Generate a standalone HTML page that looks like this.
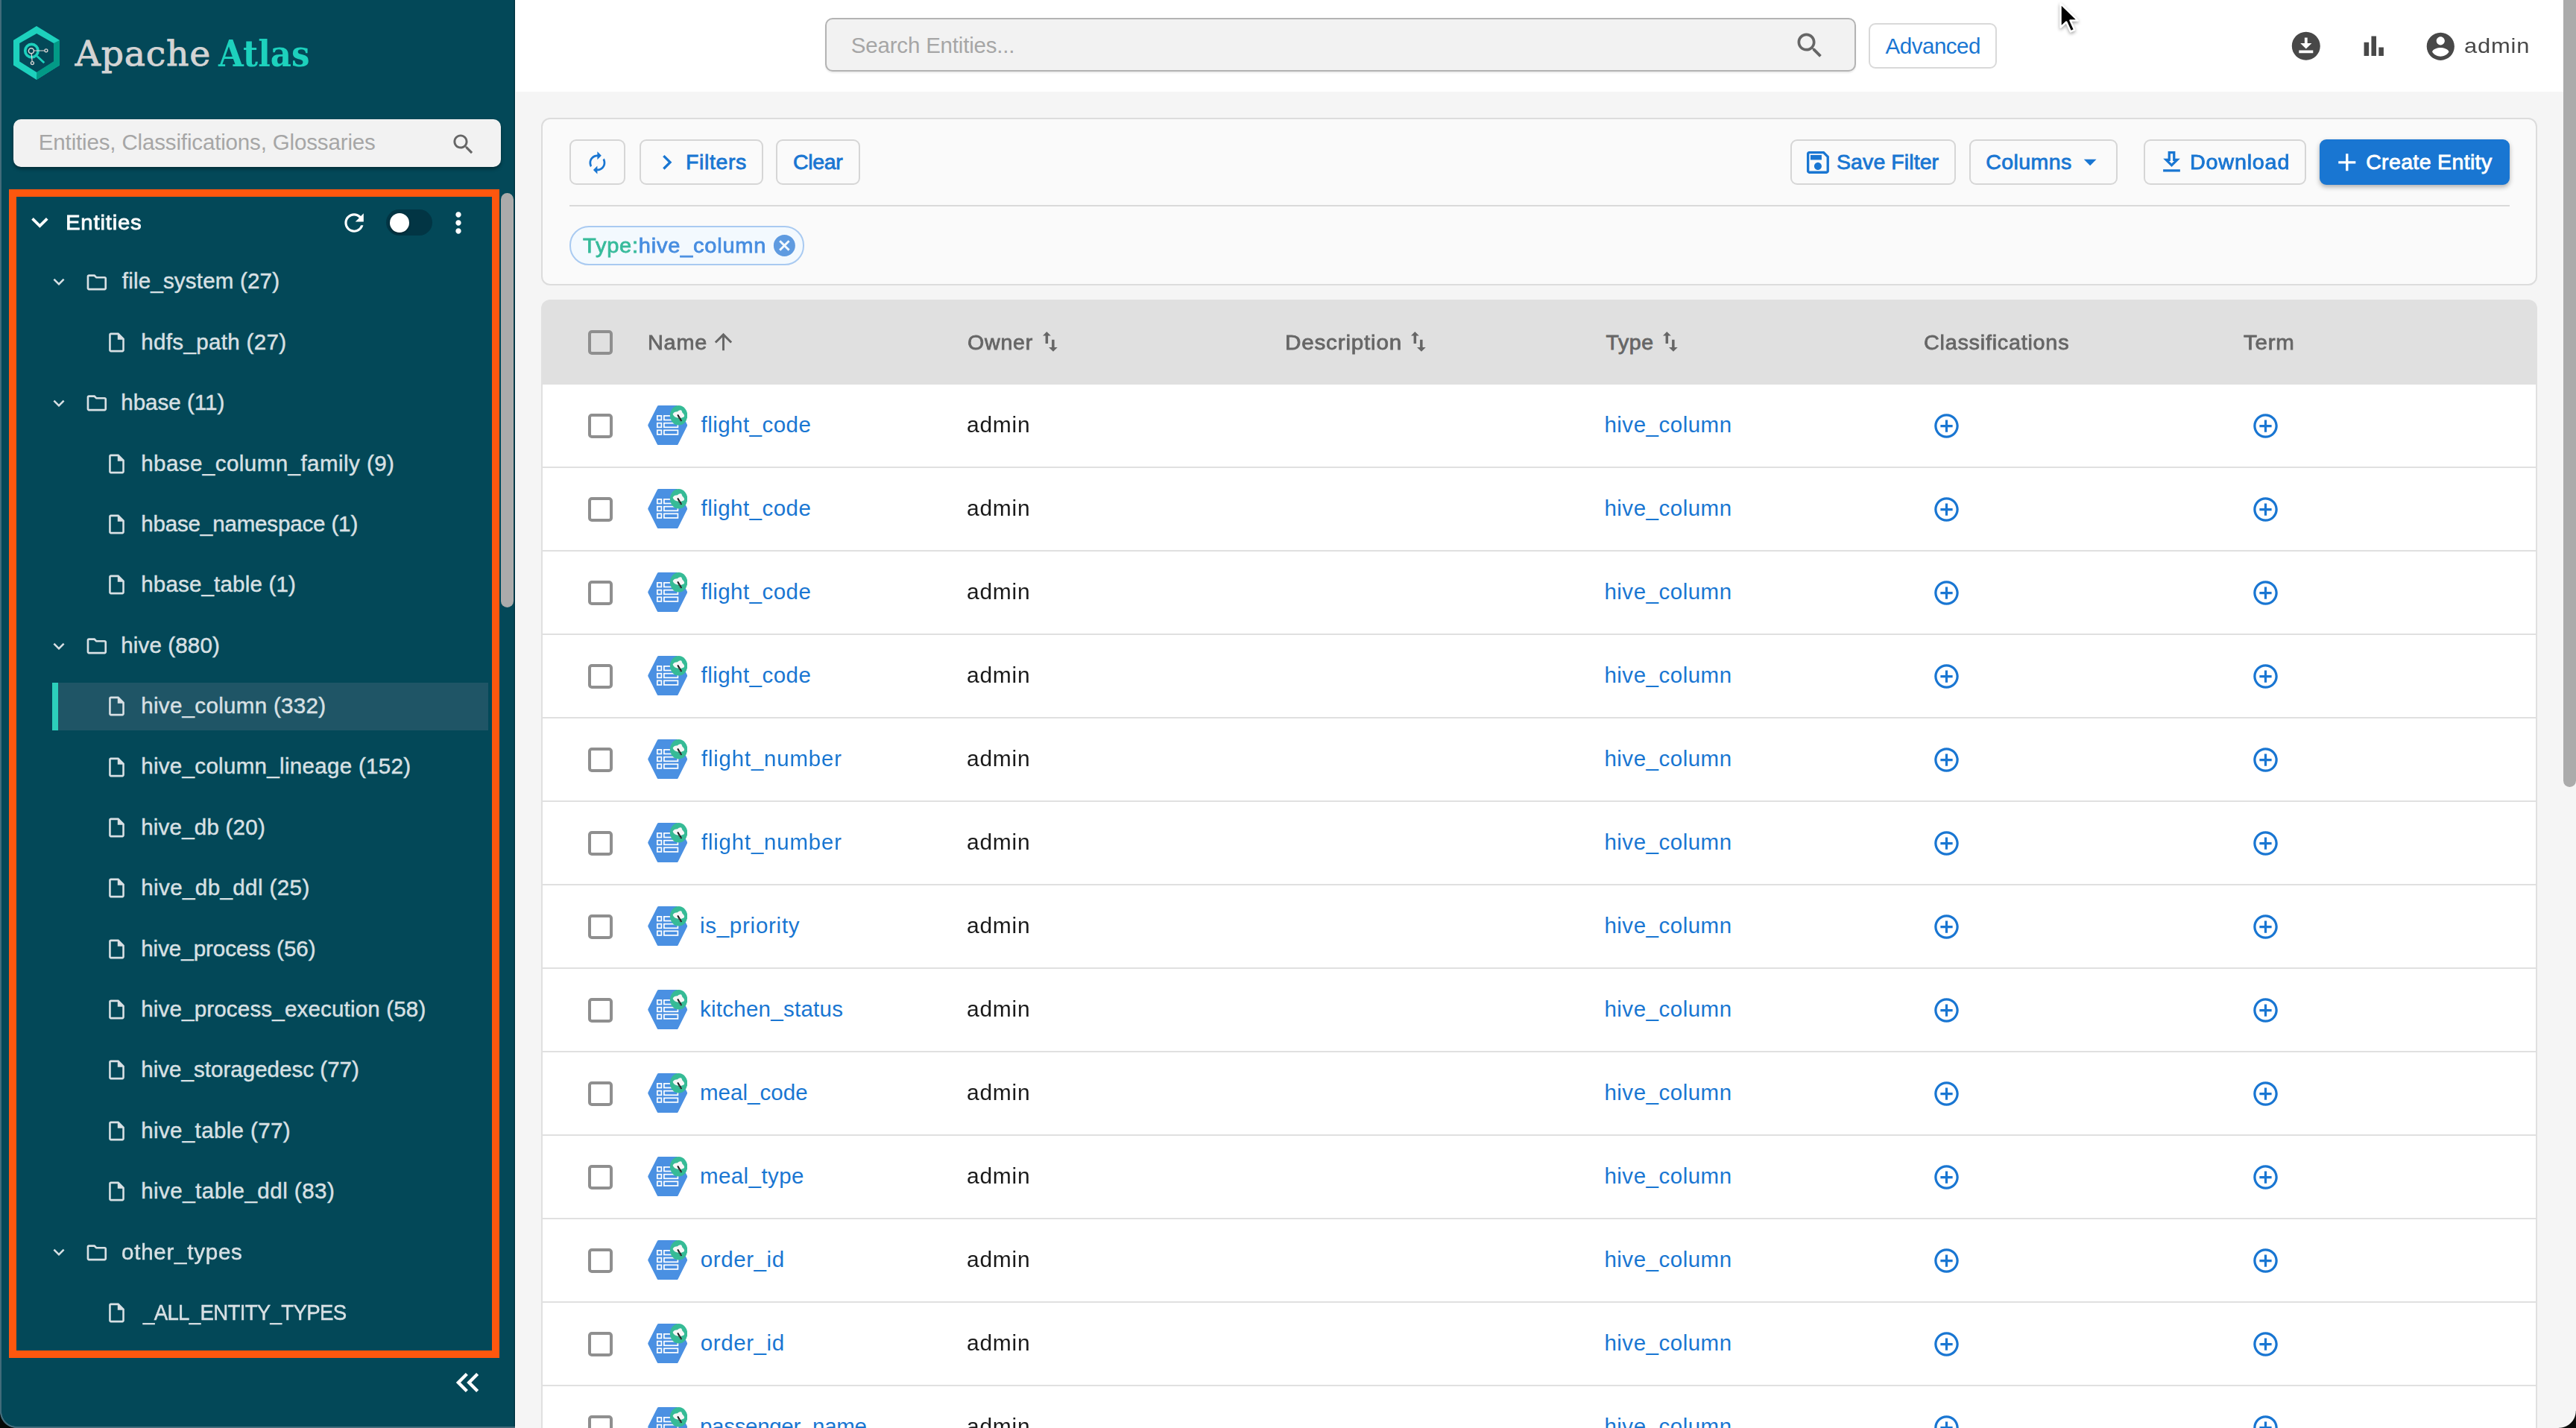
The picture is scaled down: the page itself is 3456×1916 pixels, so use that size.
<!DOCTYPE html>
<html lang="en"><head><meta charset="utf-8"><title>Apache Atlas</title>
<style>
*{box-sizing:border-box;margin:0;padding:0}
html,body{width:3456px;height:1916px;overflow:hidden;background:#f5f5f5}
body{font-family:"Liberation Sans",sans-serif;color:#1a1a1a}
#app{position:absolute;left:0;top:0;width:3456px;height:1916px;overflow:hidden;background:#f5f5f5}
.ic{position:absolute;display:block;overflow:visible}
.t{position:absolute;white-space:pre;line-height:1}
a{text-decoration:none}
/* sidebar */
#sidebar{position:absolute;left:0;top:0;width:691px;height:1916px;background:#034858;overflow:hidden;box-shadow:inset -1.500px 0 0 #023644,1px 0 0 #fff}
#sidebar .edge{position:absolute;left:0;top:0;width:691px;height:1916px;border-left:2px solid #416b7a;border-bottom:2px solid #416b7a}
.brand{position:absolute;top:47.800px;white-space:pre;line-height:1;font-family:"DejaVu Serif",serif;font-size:48.800px}
.brand.apache{left:100.800px;top:48px;font-size:47.300px;letter-spacing:.75px;color:#d4d4d4;-webkit-text-stroke:.9px #d4d4d4}
.brand.atlas{left:293px;top:47.900px;color:#1dd1bd;font-weight:700;transform:scaleX(.893);transform-origin:0 0}
.sbsearch{position:absolute;left:18px;top:160px;width:654px;height:64px;border-radius:10px;background:#f2f2f2;box-shadow:0 3px 4px rgba(0,0,0,.35)}
.sbsearch .ph,.gsearch .ph{color:#a6a6a6}
.frame{position:absolute;left:12px;top:254px;width:658px;height:1568px;border:10px solid #fe570e}
.sbscroll{position:absolute;left:672px;top:259px;width:17px;height:556px;border-radius:8.500px;background:#ababab}
.toggle{position:absolute;left:518px;top:281px;width:62px;height:35px;border-radius:17.500px;background:#023544}
.toggle i{position:absolute;left:5px;top:4.500px;width:26px;height:26px;border-radius:50%;background:#fff;box-shadow:0 1px 3px rgba(0,0,0,.4)}
.trow{position:absolute;left:70px;width:585px;height:64px}
.trow.sel{background:#1f5566;border-left:8px solid #2ccfbb}
.trow.sel>*{margin-left:-8px}
.trow .t{color:#d8e0e4;-webkit-text-stroke:.45px #d8e0e4}
/* topbar */
#topbar{position:absolute;left:691px;top:0;width:2765px;height:122.500px;background:#fff}
.gsearch{position:absolute;left:416px;top:24px;width:1382.500px;height:72.400px;border:2px solid #b3b3b3;border-radius:10px;background:#f2f2f2;box-shadow:0 2px 2px rgba(0,0,0,.08)}
.advbtn{position:absolute;left:1816.300px;top:31px;width:172px;height:61px;border:2px solid #d9d9d9;border-radius:9px;background:#fff}
/* main */
#main{position:absolute;left:0;top:0;width:3456px;height:1916px;pointer-events:none}
.fcard{position:absolute;left:726px;top:158px;width:2678px;height:225px;border:2px solid #dcdcdc;border-radius:12px;background:#fafafa}
.btn{position:absolute;top:27.300px;height:60.300px;border:2px solid #d6d6d6;border-radius:9px;background:#fafafa}
.btn .t{color:#1976d2}
.sb{-webkit-text-stroke:.8px currentColor}
.btn.primary{background:#1976d2;border-color:#1976d2;box-shadow:0 3px 6px rgba(0,0,0,.3)}
.btn.primary .t{color:#fff}
.fdiv{position:absolute;left:36px;top:115px;width:2603px;height:2px;background:#d9d9d9}
.chip{position:absolute;left:36.300px;top:143.300px;width:314.700px;height:52.300px;border:2px solid #a9caf1;border-radius:26px;background:#f3f9fe}
.chip .k{color:#37bb9b}
.chip .v{color:#478de0}
.thead{position:absolute;left:726px;top:402.300px;width:2678px;height:113.700px;background:#e0e0e0;border-radius:12px 12px 0 0}
.thead .t{color:#666}
.cb{position:absolute;left:62.500px;width:33px;height:33px;border:4px solid #8f8f8f;border-radius:5px;background:#fff}
.thead .cb{background:#e0e0e0}
.tr{position:absolute;left:726px;width:2678px;height:112px;background:#fff;border-bottom:2px solid #e0e0e0;border-left:2px solid #e0e0e0;border-right:2px solid #e0e0e0}
.tr>*{margin-left:-2px}
.tr .lnk{color:#1976d2}
.sort{width:20px;height:27px;top:42.900px}
#vscroll{position:absolute;left:3439px;top:-8px;width:16.800px;height:1064px;border-radius:8.400px;background:#ababab}
#cursor{position:absolute;left:2762px;top:3px;width:30px;height:45px;filter:drop-shadow(0 2px 2px rgba(0,0,0,.35))}
.corner{position:absolute;left:0;top:1894px;width:22px;height:22px;background:radial-gradient(circle at 22px 0,rgba(0,0,0,0) 19.500px,#416b7a 20px,#416b7a 21.600px,#060906 22.300px)}
.corner.r{left:3433px;top:1893px;width:23px;height:23px;background:radial-gradient(circle at 0 0,rgba(0,0,0,0) 22.300px,#0a0c0a 23.300px)}

</style></head>
<body>
<div id="app">

<div id="topbar">
<div class="gsearch"><span class="t ph" style="left:32.8px;top:20.2px;font-size:29.5px;letter-spacing:-0.19px;">Search Entities...</span><svg class="ic" style="left:1296.8px;top:12.5px;width:44.3px;height:44.3px;" viewBox="0 0 24 24"><path fill="#666" d="M15.5 14h-.79l-.28-.27C15.41 12.59 16 11.11 16 9.5 16 5.91 13.09 3 9.5 3S3 5.91 3 9.5 5.91 16 9.5 16c1.61 0 3.09-.59 4.23-1.57l.27.28v.79l5 4.99L20.49 19l-4.99-5zm-6 0C7.01 14 5 11.990 5 9.5S7.010 5 9.5 5 14 7.010 14 9.5 11.990 14 9.5 14z"/></svg></div>
<div class="advbtn"><span class="t" style="left:20.3px;top:13.5px;font-size:29.5px;letter-spacing:-0.48px;color:#1976d2">Advanced</span></div>
<svg class="ic" style="left:2380.2px;top:38.8px;width:45.6px;height:45.6px;" viewBox="0 0 24 24"><path fill="#484848" d="M12 2C6.490 2 2 6.490 2 12s4.490 10 10 10 10-4.490 10-10S17.510 2 12 2zm-1 8V6h2v4h3l-4 4-4-4h3zm6 7H7v-2h10v2z"/></svg>
<svg class="ic" style="left:2473.9px;top:41.9px;width:39.5px;height:39.5px;" viewBox="0 0 24 24"><path fill="#484848" d="M4 9h4v11H4zm12 4h4v7h-4zm-6-9h4v16h-4z"/></svg>
<svg class="ic" style="left:2560.7px;top:39.8px;width:44.6px;height:44.6px;" viewBox="0 0 24 24"><path fill="#484848" d="M12 2C6.480 2 2 6.480 2 12s4.480 10 10 10 10-4.480 10-10S17.520 2 12 2zm0 3c1.660 0 3 1.340 3 3s-1.340 3-3 3-3-1.340-3-3 1.340-3 3-3zm0 14.200c-2.500 0-4.710-1.280-6-3.220.030-1.990 4-3.080 6-3.080 1.990 0 5.970 1.090 6 3.080-1.290 1.940-3.500 3.220-6 3.220z"/></svg>
<span class="t" style="left:2614.5px;top:46.5px;font-size:28.5px;transform:scaleX(1.0852);transform-origin:0 0;letter-spacing:0.75px;color:#484848">admin</span>
</div>
<div id="main">
<div class="fcard">
<div class="btn" style="left:36.3px;width:75.2px"><svg class="ic" style="left:18.8px;top:12.6px;width:32.8px;height:32.8px;" viewBox="0 0 24 24"><path fill="#1976d2" d="M12 6v3l4-4-4-4v3c-4.420 0-8 3.580-8 8 0 1.570.460 3.030 1.240 4.260L6.700 14.800c-.450-.830-.7-1.790-.7-2.800 0-3.310 2.690-6 6-6zm6.760 1.740L17.300 9.200c.440.840.7 1.790.7 2.800 0 3.310-2.690 6-6 6v-3l-4 4 4 4v-3c4.420 0 8-3.580 8-8 0-1.570-.460-3.030-1.240-4.260z"/></svg></div>
<div class="btn" style="left:130.3px;width:165.3px"><svg class="ic" style="left:15.1px;top:8.5px;width:39.6px;height:39.6px;" viewBox="0 0 24 24"><path fill="#1976d2" d="M10 6 8.59 7.41 13.17 12l-4.580 4.590L10 18l6-6z"/></svg><span class="t sb" style="left:59.7px;top:13.5px;font-size:28.5px;letter-spacing:0.61px;">Filters</span></div>
<div class="btn" style="left:313px;width:112.5px"><span class="t sb" style="left:21.1px;top:13.5px;font-size:28.5px;letter-spacing:-0.34px;">Clear</span></div>
<div class="btn" style="left:1673.5px;width:222.1px"><svg class="ic" style="left:15.5px;top:8.4px;width:39.9px;height:39.9px;" viewBox="0 0 24 24"><path fill="#1976d2" d="M17 3H5c-1.110 0-2 .9-2 2v14c0 1.100.890 2 2 2h14c1.100 0 2-.9 2-2V7l-4-4zm2 16H5V5h11.170L19 7.830V19zm-7-7c-1.660 0-3 1.340-3 3s1.340 3 3 3 3-1.340 3-3-1.340-3-3-3zM6 6h9v4H6z"/></svg><span class="t sb" style="left:60.5px;top:13.5px;font-size:28.5px;letter-spacing:0.09px;">Save Filter</span></div>
<div class="btn" style="left:1914.4px;width:198.4px"><span class="t sb" style="left:19.9px;top:13.5px;font-size:28.5px;letter-spacing:0.41px;">Columns</span><svg class="ic" style="left:139.3px;top:8.1px;width:40.3px;height:40.3px;" viewBox="0 0 24 24"><path fill="#1976d2" d="M7 10l5 5 5-5z"/></svg></div>
<div class="btn" style="left:2148.3px;width:217.4px"><svg class="ic" style="left:15.9px;top:9.1px;width:39px;height:39px;" viewBox="0 0 24 24"><path fill="#1976d2" d="M13 5v6h1.170L12 13.170 9.830 11H11V5h2m2-2H9v6H5l7 7 7-7h-4V3zm4 15H5v2h14v-2z"/></svg><span class="t sb" style="left:60.1px;top:13.5px;font-size:28.5px;transform:scaleX(1.0106);transform-origin:0 0;letter-spacing:0.75px;">Download</span></div>
<div class="btn primary" style="left:2383.9px;width:255px"><svg class="ic" style="left:15.1px;top:9px;width:39.6px;height:39.6px;" viewBox="0 0 24 24"><path fill="#fff" d="M19 13h-6v6h-2v-6H5v-2h6V5h2v6h6v2z"/></svg><span class="t sb" style="left:60.3px;top:13.5px;font-size:28.5px;letter-spacing:0.35px;">Create Entity</span></div>
<div class="fdiv"></div>
<div class="chip"><span class="t sb" style="left:15.9px;top:9.5px;font-size:28.5px;transform:scaleX(1.0184);transform-origin:0 0;letter-spacing:0.75px;"><span class="k">Type:</span><span class="v">hive_column</span></span><svg class="ic" style="left:268.8px;top:7px;width:34.8px;height:34.8px;" viewBox="0 0 24 24"><path fill="#5f9be0" d="M12 2C6.470 2 2 6.470 2 12s4.470 10 10 10 10-4.470 10-10S17.530 2 12 2zm5 13.590L15.590 17 12 13.410 8.410 17 7 15.590 10.590 12 7 8.410 8.410 7 12 10.590 15.590 7 17 8.410 13.410 12 17 15.590z"/></svg></div>
</div>
<div class="thead">
<div class="cb" style="top:40.600px"></div>
<span class="t sb" style="left:142.7px;top:42.7px;font-size:28.5px;transform:scaleX(1.0117);transform-origin:0 0;letter-spacing:0.75px;">Name</span><svg class="ic" style="left:227.4px;top:38.4px;width:35px;height:35px;" viewBox="0 0 24 24"><path fill="#666" d="M4 12l1.410 1.410L11 7.830V20h2V7.830l5.580 5.590L20 12l-8-8-8 8z"/></svg>
<span class="t sb" style="left:572.3px;top:42.7px;font-size:28.5px;transform:scaleX(1.0032);transform-origin:0 0;letter-spacing:0.75px;">Owner</span><svg class="ic sort" viewBox="0 0 20 27" style="left:673px"><path fill="#666" d="M5.300 0 0 5.600h3.600v10.500h3.500V5.600h3.700zM12.100 10.800v10.300H8l6 5.600 5.800-5.600h-4.200V10.800z"/></svg>
<span class="t sb" style="left:997.8px;top:42.7px;font-size:28.5px;transform:scaleX(1.0413);transform-origin:0 0;letter-spacing:0.75px;">Description</span><svg class="ic sort" viewBox="0 0 20 27" style="left:1167.4px"><path fill="#666" d="M5.300 0 0 5.600h3.600v10.500h3.500V5.600h3.700zM12.100 10.800v10.300H8l6 5.600 5.800-5.600h-4.200V10.800z"/></svg>
<span class="t sb" style="left:1428.5px;top:42.7px;font-size:28.5px;letter-spacing:0.64px;">Type</span><svg class="ic sort" viewBox="0 0 20 27" style="left:1505px"><path fill="#666" d="M5.300 0 0 5.600h3.600v10.500h3.500V5.600h3.700zM12.100 10.800v10.300H8l6 5.600 5.800-5.600h-4.200V10.800z"/></svg>
<span class="t sb" style="left:1855.1px;top:42.7px;font-size:28.5px;transform:scaleX(1.0097);transform-origin:0 0;letter-spacing:0.75px;">Classifications</span>
<span class="t sb" style="left:2284px;top:42.7px;font-size:28.5px;transform:scaleX(1.0345);transform-origin:0 0;letter-spacing:0.75px;">Term</span>
</div>
<div class="tr" style="top:516px"><div class="cb" style="top:38.600px"></div><svg class="ic" style="left:142.900px;top:27.900px;width:53.400px;height:53.400px;overflow:hidden" viewBox="0 0 53.400 53.400"><path fill="#4a90e2" stroke="#4a90e2" stroke-width="5" stroke-linejoin="round" d="M2.800 26.700 14.900 2.500H38.500L50.600 26.700 38.500 50.900H14.900z"/><g fill="#4a90e2" stroke="#fff" stroke-width="1.700"><rect x="12.800" y="13.900" width="5.600" height="5.600"/><rect x="12.800" y="23.700" width="5.600" height="5.600"/><rect x="12.800" y="33.300" width="5.600" height="5.600"/><rect x="21.900" y="13.900" width="18.500" height="5.600"/><rect x="21.900" y="23.700" width="18.500" height="5.600"/><rect x="21.900" y="33.300" width="18.500" height="5.600"/></g><g><ellipse cx="41.600" cy="13.300" rx="11.700" ry="13.200" fill="#36bb96"/><path fill="#f6f6f6" d="M33.600 11.800c.8-2.600 3.800-3.700 6.400-3.600 1.300-1.700 3.900-2.600 5-1.700 1.100.9.900 2.400 1.800 3.600 1.300 1.400 2.800 2.900 2.200 4.500-.6 1.600-2.700 1.400-4 2.300-1.400.9-2.700.3-3.900-.7-2.300.7-5.900-.6-7.500-4.400z"/><path fill="none" stroke="#1a1a1a" stroke-width="2.100" stroke-linecap="round" d="M40.600 13.200 44.900 20.200"/><path fill="none" stroke="#555" stroke-width="1.100" d="M41.200 17.600l3-1.400M42.800 20.400l2.800-1.200"/></g></svg><a class="t lnk" style="left:214.5px;top:39.1px;font-size:29.5px;letter-spacing:0.46px;">flight_code</a><span class="t" style="left:571.1px;top:39.1px;font-size:29.5px;transform:scaleX(1.0156);transform-origin:0 0;letter-spacing:0.75px;">admin</span><a class="t lnk" style="left:1426.4px;top:39.1px;font-size:29.5px;letter-spacing:0.51px;">hive_column</a><svg class="ic" style="left:1865.9px;top:35.7px;width:39px;height:39px;" viewBox="0 0 24 24"><path fill="#1976d2" d="M13 7h-2v4H7v2h4v4h2v-4h4v-2h-4V7zm-1-5C6.480 2 2 6.480 2 12s4.480 10 10 10 10-4.480 10-10S17.520 2 12 2zm0 18c-4.410 0-8-3.590-8-8s3.590-8 8-8 8 3.590 8 8-3.590 8-8 8z"/></svg><svg class="ic" style="left:2293.9px;top:35.7px;width:39px;height:39px;" viewBox="0 0 24 24"><path fill="#1976d2" d="M13 7h-2v4H7v2h4v4h2v-4h4v-2h-4V7zm-1-5C6.480 2 2 6.480 2 12s4.480 10 10 10 10-4.480 10-10S17.520 2 12 2zm0 18c-4.410 0-8-3.590-8-8s3.590-8 8-8 8 3.590 8 8-3.590 8-8 8z"/></svg></div>
<div class="tr" style="top:628px"><div class="cb" style="top:38.600px"></div><svg class="ic" style="left:142.900px;top:27.900px;width:53.400px;height:53.400px;overflow:hidden" viewBox="0 0 53.400 53.400"><path fill="#4a90e2" stroke="#4a90e2" stroke-width="5" stroke-linejoin="round" d="M2.800 26.700 14.900 2.500H38.500L50.600 26.700 38.500 50.900H14.900z"/><g fill="#4a90e2" stroke="#fff" stroke-width="1.700"><rect x="12.800" y="13.900" width="5.600" height="5.600"/><rect x="12.800" y="23.700" width="5.600" height="5.600"/><rect x="12.800" y="33.300" width="5.600" height="5.600"/><rect x="21.900" y="13.900" width="18.500" height="5.600"/><rect x="21.900" y="23.700" width="18.500" height="5.600"/><rect x="21.900" y="33.300" width="18.500" height="5.600"/></g><g><ellipse cx="41.600" cy="13.300" rx="11.700" ry="13.200" fill="#36bb96"/><path fill="#f6f6f6" d="M33.600 11.800c.8-2.600 3.800-3.700 6.400-3.600 1.300-1.700 3.900-2.600 5-1.700 1.100.9.900 2.400 1.800 3.600 1.300 1.400 2.800 2.900 2.200 4.500-.6 1.600-2.700 1.400-4 2.300-1.400.9-2.700.3-3.900-.7-2.300.7-5.900-.6-7.500-4.400z"/><path fill="none" stroke="#1a1a1a" stroke-width="2.100" stroke-linecap="round" d="M40.600 13.200 44.900 20.200"/><path fill="none" stroke="#555" stroke-width="1.100" d="M41.200 17.600l3-1.400M42.800 20.400l2.800-1.200"/></g></svg><a class="t lnk" style="left:214.5px;top:39.1px;font-size:29.5px;letter-spacing:0.46px;">flight_code</a><span class="t" style="left:571.1px;top:39.1px;font-size:29.5px;transform:scaleX(1.0156);transform-origin:0 0;letter-spacing:0.75px;">admin</span><a class="t lnk" style="left:1426.4px;top:39.1px;font-size:29.5px;letter-spacing:0.51px;">hive_column</a><svg class="ic" style="left:1865.9px;top:35.7px;width:39px;height:39px;" viewBox="0 0 24 24"><path fill="#1976d2" d="M13 7h-2v4H7v2h4v4h2v-4h4v-2h-4V7zm-1-5C6.480 2 2 6.480 2 12s4.480 10 10 10 10-4.480 10-10S17.520 2 12 2zm0 18c-4.410 0-8-3.590-8-8s3.590-8 8-8 8 3.590 8 8-3.590 8-8 8z"/></svg><svg class="ic" style="left:2293.9px;top:35.7px;width:39px;height:39px;" viewBox="0 0 24 24"><path fill="#1976d2" d="M13 7h-2v4H7v2h4v4h2v-4h4v-2h-4V7zm-1-5C6.480 2 2 6.480 2 12s4.480 10 10 10 10-4.480 10-10S17.520 2 12 2zm0 18c-4.410 0-8-3.590-8-8s3.590-8 8-8 8 3.590 8 8-3.590 8-8 8z"/></svg></div>
<div class="tr" style="top:740px"><div class="cb" style="top:38.600px"></div><svg class="ic" style="left:142.900px;top:27.900px;width:53.400px;height:53.400px;overflow:hidden" viewBox="0 0 53.400 53.400"><path fill="#4a90e2" stroke="#4a90e2" stroke-width="5" stroke-linejoin="round" d="M2.800 26.700 14.900 2.500H38.500L50.600 26.700 38.500 50.900H14.900z"/><g fill="#4a90e2" stroke="#fff" stroke-width="1.700"><rect x="12.800" y="13.900" width="5.600" height="5.600"/><rect x="12.800" y="23.700" width="5.600" height="5.600"/><rect x="12.800" y="33.300" width="5.600" height="5.600"/><rect x="21.900" y="13.900" width="18.500" height="5.600"/><rect x="21.900" y="23.700" width="18.500" height="5.600"/><rect x="21.900" y="33.300" width="18.500" height="5.600"/></g><g><ellipse cx="41.600" cy="13.300" rx="11.700" ry="13.200" fill="#36bb96"/><path fill="#f6f6f6" d="M33.600 11.800c.8-2.600 3.800-3.700 6.400-3.600 1.300-1.700 3.900-2.600 5-1.700 1.100.9.900 2.400 1.800 3.600 1.300 1.400 2.800 2.900 2.200 4.500-.6 1.600-2.700 1.400-4 2.300-1.400.9-2.700.3-3.900-.7-2.300.7-5.900-.6-7.500-4.400z"/><path fill="none" stroke="#1a1a1a" stroke-width="2.100" stroke-linecap="round" d="M40.600 13.200 44.900 20.200"/><path fill="none" stroke="#555" stroke-width="1.100" d="M41.200 17.600l3-1.400M42.800 20.400l2.800-1.200"/></g></svg><a class="t lnk" style="left:214.5px;top:39.1px;font-size:29.5px;letter-spacing:0.46px;">flight_code</a><span class="t" style="left:571.1px;top:39.1px;font-size:29.5px;transform:scaleX(1.0156);transform-origin:0 0;letter-spacing:0.75px;">admin</span><a class="t lnk" style="left:1426.4px;top:39.1px;font-size:29.5px;letter-spacing:0.51px;">hive_column</a><svg class="ic" style="left:1865.9px;top:35.7px;width:39px;height:39px;" viewBox="0 0 24 24"><path fill="#1976d2" d="M13 7h-2v4H7v2h4v4h2v-4h4v-2h-4V7zm-1-5C6.480 2 2 6.480 2 12s4.480 10 10 10 10-4.480 10-10S17.520 2 12 2zm0 18c-4.410 0-8-3.590-8-8s3.590-8 8-8 8 3.590 8 8-3.590 8-8 8z"/></svg><svg class="ic" style="left:2293.9px;top:35.7px;width:39px;height:39px;" viewBox="0 0 24 24"><path fill="#1976d2" d="M13 7h-2v4H7v2h4v4h2v-4h4v-2h-4V7zm-1-5C6.480 2 2 6.480 2 12s4.480 10 10 10 10-4.480 10-10S17.520 2 12 2zm0 18c-4.410 0-8-3.590-8-8s3.590-8 8-8 8 3.590 8 8-3.590 8-8 8z"/></svg></div>
<div class="tr" style="top:852px"><div class="cb" style="top:38.600px"></div><svg class="ic" style="left:142.900px;top:27.900px;width:53.400px;height:53.400px;overflow:hidden" viewBox="0 0 53.400 53.400"><path fill="#4a90e2" stroke="#4a90e2" stroke-width="5" stroke-linejoin="round" d="M2.800 26.700 14.900 2.500H38.500L50.600 26.700 38.500 50.900H14.900z"/><g fill="#4a90e2" stroke="#fff" stroke-width="1.700"><rect x="12.800" y="13.900" width="5.600" height="5.600"/><rect x="12.800" y="23.700" width="5.600" height="5.600"/><rect x="12.800" y="33.300" width="5.600" height="5.600"/><rect x="21.900" y="13.900" width="18.500" height="5.600"/><rect x="21.900" y="23.700" width="18.500" height="5.600"/><rect x="21.900" y="33.300" width="18.500" height="5.600"/></g><g><ellipse cx="41.600" cy="13.300" rx="11.700" ry="13.200" fill="#36bb96"/><path fill="#f6f6f6" d="M33.600 11.800c.8-2.600 3.800-3.700 6.400-3.600 1.300-1.700 3.900-2.600 5-1.700 1.100.9.900 2.400 1.800 3.600 1.300 1.400 2.800 2.900 2.200 4.500-.6 1.600-2.700 1.400-4 2.300-1.400.9-2.700.3-3.900-.7-2.300.7-5.900-.6-7.500-4.400z"/><path fill="none" stroke="#1a1a1a" stroke-width="2.100" stroke-linecap="round" d="M40.600 13.200 44.900 20.200"/><path fill="none" stroke="#555" stroke-width="1.100" d="M41.200 17.600l3-1.400M42.800 20.400l2.800-1.200"/></g></svg><a class="t lnk" style="left:214.5px;top:39.1px;font-size:29.5px;letter-spacing:0.46px;">flight_code</a><span class="t" style="left:571.1px;top:39.1px;font-size:29.5px;transform:scaleX(1.0156);transform-origin:0 0;letter-spacing:0.75px;">admin</span><a class="t lnk" style="left:1426.4px;top:39.1px;font-size:29.5px;letter-spacing:0.51px;">hive_column</a><svg class="ic" style="left:1865.9px;top:35.7px;width:39px;height:39px;" viewBox="0 0 24 24"><path fill="#1976d2" d="M13 7h-2v4H7v2h4v4h2v-4h4v-2h-4V7zm-1-5C6.480 2 2 6.480 2 12s4.480 10 10 10 10-4.480 10-10S17.520 2 12 2zm0 18c-4.410 0-8-3.590-8-8s3.590-8 8-8 8 3.590 8 8-3.590 8-8 8z"/></svg><svg class="ic" style="left:2293.9px;top:35.7px;width:39px;height:39px;" viewBox="0 0 24 24"><path fill="#1976d2" d="M13 7h-2v4H7v2h4v4h2v-4h4v-2h-4V7zm-1-5C6.480 2 2 6.480 2 12s4.480 10 10 10 10-4.480 10-10S17.520 2 12 2zm0 18c-4.410 0-8-3.590-8-8s3.590-8 8-8 8 3.590 8 8-3.590 8-8 8z"/></svg></div>
<div class="tr" style="top:964px"><div class="cb" style="top:38.600px"></div><svg class="ic" style="left:142.900px;top:27.900px;width:53.400px;height:53.400px;overflow:hidden" viewBox="0 0 53.400 53.400"><path fill="#4a90e2" stroke="#4a90e2" stroke-width="5" stroke-linejoin="round" d="M2.800 26.700 14.900 2.500H38.500L50.600 26.700 38.500 50.900H14.900z"/><g fill="#4a90e2" stroke="#fff" stroke-width="1.700"><rect x="12.800" y="13.900" width="5.600" height="5.600"/><rect x="12.800" y="23.700" width="5.600" height="5.600"/><rect x="12.800" y="33.300" width="5.600" height="5.600"/><rect x="21.900" y="13.900" width="18.500" height="5.600"/><rect x="21.900" y="23.700" width="18.500" height="5.600"/><rect x="21.900" y="33.300" width="18.500" height="5.600"/></g><g><ellipse cx="41.600" cy="13.300" rx="11.700" ry="13.200" fill="#36bb96"/><path fill="#f6f6f6" d="M33.600 11.800c.8-2.600 3.800-3.700 6.400-3.600 1.300-1.700 3.900-2.600 5-1.700 1.100.9.900 2.400 1.800 3.600 1.300 1.400 2.800 2.900 2.200 4.500-.6 1.600-2.700 1.400-4 2.300-1.400.9-2.700.3-3.900-.7-2.300.7-5.900-.6-7.500-4.400z"/><path fill="none" stroke="#1a1a1a" stroke-width="2.100" stroke-linecap="round" d="M40.600 13.200 44.900 20.200"/><path fill="none" stroke="#555" stroke-width="1.100" d="M41.200 17.600l3-1.400M42.800 20.400l2.800-1.200"/></g></svg><a class="t lnk" style="left:214.5px;top:39.1px;font-size:29.5px;transform:scaleX(1.0012);transform-origin:0 0;letter-spacing:0.75px;">flight_number</a><span class="t" style="left:571.1px;top:39.1px;font-size:29.5px;transform:scaleX(1.0156);transform-origin:0 0;letter-spacing:0.75px;">admin</span><a class="t lnk" style="left:1426.4px;top:39.1px;font-size:29.5px;letter-spacing:0.51px;">hive_column</a><svg class="ic" style="left:1865.9px;top:35.7px;width:39px;height:39px;" viewBox="0 0 24 24"><path fill="#1976d2" d="M13 7h-2v4H7v2h4v4h2v-4h4v-2h-4V7zm-1-5C6.480 2 2 6.480 2 12s4.480 10 10 10 10-4.480 10-10S17.520 2 12 2zm0 18c-4.410 0-8-3.590-8-8s3.590-8 8-8 8 3.590 8 8-3.590 8-8 8z"/></svg><svg class="ic" style="left:2293.9px;top:35.7px;width:39px;height:39px;" viewBox="0 0 24 24"><path fill="#1976d2" d="M13 7h-2v4H7v2h4v4h2v-4h4v-2h-4V7zm-1-5C6.480 2 2 6.480 2 12s4.480 10 10 10 10-4.480 10-10S17.520 2 12 2zm0 18c-4.410 0-8-3.590-8-8s3.590-8 8-8 8 3.590 8 8-3.590 8-8 8z"/></svg></div>
<div class="tr" style="top:1076px"><div class="cb" style="top:38.600px"></div><svg class="ic" style="left:142.900px;top:27.900px;width:53.400px;height:53.400px;overflow:hidden" viewBox="0 0 53.400 53.400"><path fill="#4a90e2" stroke="#4a90e2" stroke-width="5" stroke-linejoin="round" d="M2.800 26.700 14.900 2.500H38.500L50.600 26.700 38.500 50.900H14.900z"/><g fill="#4a90e2" stroke="#fff" stroke-width="1.700"><rect x="12.800" y="13.900" width="5.600" height="5.600"/><rect x="12.800" y="23.700" width="5.600" height="5.600"/><rect x="12.800" y="33.300" width="5.600" height="5.600"/><rect x="21.900" y="13.900" width="18.500" height="5.600"/><rect x="21.900" y="23.700" width="18.500" height="5.600"/><rect x="21.900" y="33.300" width="18.500" height="5.600"/></g><g><ellipse cx="41.600" cy="13.300" rx="11.700" ry="13.200" fill="#36bb96"/><path fill="#f6f6f6" d="M33.600 11.800c.8-2.600 3.800-3.700 6.400-3.600 1.300-1.700 3.900-2.600 5-1.700 1.100.9.900 2.400 1.800 3.600 1.300 1.400 2.800 2.900 2.200 4.500-.6 1.600-2.700 1.400-4 2.300-1.400.9-2.700.3-3.900-.7-2.300.7-5.900-.6-7.500-4.400z"/><path fill="none" stroke="#1a1a1a" stroke-width="2.100" stroke-linecap="round" d="M40.600 13.200 44.900 20.200"/><path fill="none" stroke="#555" stroke-width="1.100" d="M41.200 17.600l3-1.400M42.800 20.400l2.800-1.200"/></g></svg><a class="t lnk" style="left:214.5px;top:39.1px;font-size:29.5px;transform:scaleX(1.0012);transform-origin:0 0;letter-spacing:0.75px;">flight_number</a><span class="t" style="left:571.1px;top:39.1px;font-size:29.5px;transform:scaleX(1.0156);transform-origin:0 0;letter-spacing:0.75px;">admin</span><a class="t lnk" style="left:1426.4px;top:39.1px;font-size:29.5px;letter-spacing:0.51px;">hive_column</a><svg class="ic" style="left:1865.9px;top:35.7px;width:39px;height:39px;" viewBox="0 0 24 24"><path fill="#1976d2" d="M13 7h-2v4H7v2h4v4h2v-4h4v-2h-4V7zm-1-5C6.480 2 2 6.480 2 12s4.480 10 10 10 10-4.480 10-10S17.520 2 12 2zm0 18c-4.410 0-8-3.590-8-8s3.590-8 8-8 8 3.590 8 8-3.590 8-8 8z"/></svg><svg class="ic" style="left:2293.9px;top:35.7px;width:39px;height:39px;" viewBox="0 0 24 24"><path fill="#1976d2" d="M13 7h-2v4H7v2h4v4h2v-4h4v-2h-4V7zm-1-5C6.480 2 2 6.480 2 12s4.480 10 10 10 10-4.480 10-10S17.520 2 12 2zm0 18c-4.410 0-8-3.590-8-8s3.590-8 8-8 8 3.590 8 8-3.590 8-8 8z"/></svg></div>
<div class="tr" style="top:1188px"><div class="cb" style="top:38.600px"></div><svg class="ic" style="left:142.900px;top:27.900px;width:53.400px;height:53.400px;overflow:hidden" viewBox="0 0 53.400 53.400"><path fill="#4a90e2" stroke="#4a90e2" stroke-width="5" stroke-linejoin="round" d="M2.800 26.700 14.900 2.500H38.500L50.600 26.700 38.500 50.900H14.900z"/><g fill="#4a90e2" stroke="#fff" stroke-width="1.700"><rect x="12.800" y="13.900" width="5.600" height="5.600"/><rect x="12.800" y="23.700" width="5.600" height="5.600"/><rect x="12.800" y="33.300" width="5.600" height="5.600"/><rect x="21.900" y="13.900" width="18.500" height="5.600"/><rect x="21.900" y="23.700" width="18.500" height="5.600"/><rect x="21.900" y="33.300" width="18.500" height="5.600"/></g><g><ellipse cx="41.600" cy="13.300" rx="11.700" ry="13.200" fill="#36bb96"/><path fill="#f6f6f6" d="M33.600 11.800c.8-2.600 3.800-3.700 6.400-3.600 1.300-1.700 3.900-2.600 5-1.700 1.100.9.900 2.400 1.800 3.600 1.300 1.400 2.800 2.900 2.200 4.500-.6 1.600-2.700 1.400-4 2.300-1.400.9-2.700.3-3.900-.7-2.300.7-5.900-.6-7.500-4.400z"/><path fill="none" stroke="#1a1a1a" stroke-width="2.100" stroke-linecap="round" d="M40.600 13.200 44.900 20.200"/><path fill="none" stroke="#555" stroke-width="1.100" d="M41.200 17.600l3-1.400M42.800 20.400l2.800-1.200"/></g></svg><a class="t lnk" style="left:212.9px;top:39.1px;font-size:29.5px;letter-spacing:0.75px;">is_priority</a><span class="t" style="left:571.1px;top:39.1px;font-size:29.5px;transform:scaleX(1.0156);transform-origin:0 0;letter-spacing:0.75px;">admin</span><a class="t lnk" style="left:1426.4px;top:39.1px;font-size:29.5px;letter-spacing:0.51px;">hive_column</a><svg class="ic" style="left:1865.9px;top:35.7px;width:39px;height:39px;" viewBox="0 0 24 24"><path fill="#1976d2" d="M13 7h-2v4H7v2h4v4h2v-4h4v-2h-4V7zm-1-5C6.480 2 2 6.480 2 12s4.480 10 10 10 10-4.480 10-10S17.520 2 12 2zm0 18c-4.410 0-8-3.590-8-8s3.590-8 8-8 8 3.590 8 8-3.590 8-8 8z"/></svg><svg class="ic" style="left:2293.9px;top:35.7px;width:39px;height:39px;" viewBox="0 0 24 24"><path fill="#1976d2" d="M13 7h-2v4H7v2h4v4h2v-4h4v-2h-4V7zm-1-5C6.480 2 2 6.480 2 12s4.480 10 10 10 10-4.480 10-10S17.520 2 12 2zm0 18c-4.410 0-8-3.590-8-8s3.590-8 8-8 8 3.590 8 8-3.590 8-8 8z"/></svg></div>
<div class="tr" style="top:1300px"><div class="cb" style="top:38.600px"></div><svg class="ic" style="left:142.900px;top:27.900px;width:53.400px;height:53.400px;overflow:hidden" viewBox="0 0 53.400 53.400"><path fill="#4a90e2" stroke="#4a90e2" stroke-width="5" stroke-linejoin="round" d="M2.800 26.700 14.900 2.500H38.500L50.600 26.700 38.500 50.900H14.900z"/><g fill="#4a90e2" stroke="#fff" stroke-width="1.700"><rect x="12.800" y="13.900" width="5.600" height="5.600"/><rect x="12.800" y="23.700" width="5.600" height="5.600"/><rect x="12.800" y="33.300" width="5.600" height="5.600"/><rect x="21.900" y="13.900" width="18.500" height="5.600"/><rect x="21.900" y="23.700" width="18.500" height="5.600"/><rect x="21.900" y="33.300" width="18.500" height="5.600"/></g><g><ellipse cx="41.600" cy="13.300" rx="11.700" ry="13.200" fill="#36bb96"/><path fill="#f6f6f6" d="M33.600 11.800c.8-2.600 3.800-3.700 6.400-3.600 1.300-1.700 3.900-2.600 5-1.700 1.100.9.900 2.400 1.800 3.600 1.300 1.400 2.800 2.900 2.200 4.500-.6 1.600-2.700 1.400-4 2.300-1.400.9-2.700.3-3.900-.7-2.300.7-5.900-.6-7.500-4.400z"/><path fill="none" stroke="#1a1a1a" stroke-width="2.100" stroke-linecap="round" d="M40.600 13.200 44.900 20.200"/><path fill="none" stroke="#555" stroke-width="1.100" d="M41.200 17.600l3-1.400M42.800 20.400l2.800-1.200"/></g></svg><a class="t lnk" style="left:212.9px;top:39.1px;font-size:29.5px;letter-spacing:0.27px;">kitchen_status</a><span class="t" style="left:571.1px;top:39.1px;font-size:29.5px;transform:scaleX(1.0156);transform-origin:0 0;letter-spacing:0.75px;">admin</span><a class="t lnk" style="left:1426.4px;top:39.1px;font-size:29.5px;letter-spacing:0.51px;">hive_column</a><svg class="ic" style="left:1865.9px;top:35.7px;width:39px;height:39px;" viewBox="0 0 24 24"><path fill="#1976d2" d="M13 7h-2v4H7v2h4v4h2v-4h4v-2h-4V7zm-1-5C6.480 2 2 6.480 2 12s4.480 10 10 10 10-4.480 10-10S17.520 2 12 2zm0 18c-4.410 0-8-3.590-8-8s3.590-8 8-8 8 3.590 8 8-3.590 8-8 8z"/></svg><svg class="ic" style="left:2293.9px;top:35.7px;width:39px;height:39px;" viewBox="0 0 24 24"><path fill="#1976d2" d="M13 7h-2v4H7v2h4v4h2v-4h4v-2h-4V7zm-1-5C6.480 2 2 6.480 2 12s4.480 10 10 10 10-4.480 10-10S17.520 2 12 2zm0 18c-4.410 0-8-3.590-8-8s3.590-8 8-8 8 3.590 8 8-3.590 8-8 8z"/></svg></div>
<div class="tr" style="top:1412px"><div class="cb" style="top:38.600px"></div><svg class="ic" style="left:142.900px;top:27.900px;width:53.400px;height:53.400px;overflow:hidden" viewBox="0 0 53.400 53.400"><path fill="#4a90e2" stroke="#4a90e2" stroke-width="5" stroke-linejoin="round" d="M2.800 26.700 14.900 2.500H38.500L50.600 26.700 38.500 50.900H14.900z"/><g fill="#4a90e2" stroke="#fff" stroke-width="1.700"><rect x="12.800" y="13.900" width="5.600" height="5.600"/><rect x="12.800" y="23.700" width="5.600" height="5.600"/><rect x="12.800" y="33.300" width="5.600" height="5.600"/><rect x="21.900" y="13.900" width="18.500" height="5.600"/><rect x="21.900" y="23.700" width="18.500" height="5.600"/><rect x="21.900" y="33.300" width="18.500" height="5.600"/></g><g><ellipse cx="41.600" cy="13.300" rx="11.700" ry="13.200" fill="#36bb96"/><path fill="#f6f6f6" d="M33.600 11.800c.8-2.600 3.800-3.700 6.400-3.600 1.300-1.700 3.900-2.600 5-1.700 1.100.9.900 2.400 1.800 3.600 1.300 1.400 2.800 2.900 2.200 4.500-.6 1.600-2.700 1.400-4 2.300-1.400.9-2.700.3-3.900-.7-2.300.7-5.900-.6-7.500-4.400z"/><path fill="none" stroke="#1a1a1a" stroke-width="2.100" stroke-linecap="round" d="M40.600 13.200 44.900 20.200"/><path fill="none" stroke="#555" stroke-width="1.100" d="M41.200 17.600l3-1.400M42.800 20.400l2.800-1.200"/></g></svg><a class="t lnk" style="left:212.9px;top:39.1px;font-size:29.5px;letter-spacing:0.05px;">meal_code</a><span class="t" style="left:571.1px;top:39.1px;font-size:29.5px;transform:scaleX(1.0156);transform-origin:0 0;letter-spacing:0.75px;">admin</span><a class="t lnk" style="left:1426.4px;top:39.1px;font-size:29.5px;letter-spacing:0.51px;">hive_column</a><svg class="ic" style="left:1865.9px;top:35.7px;width:39px;height:39px;" viewBox="0 0 24 24"><path fill="#1976d2" d="M13 7h-2v4H7v2h4v4h2v-4h4v-2h-4V7zm-1-5C6.480 2 2 6.480 2 12s4.480 10 10 10 10-4.480 10-10S17.520 2 12 2zm0 18c-4.410 0-8-3.590-8-8s3.590-8 8-8 8 3.590 8 8-3.590 8-8 8z"/></svg><svg class="ic" style="left:2293.9px;top:35.7px;width:39px;height:39px;" viewBox="0 0 24 24"><path fill="#1976d2" d="M13 7h-2v4H7v2h4v4h2v-4h4v-2h-4V7zm-1-5C6.480 2 2 6.480 2 12s4.480 10 10 10 10-4.480 10-10S17.520 2 12 2zm0 18c-4.410 0-8-3.590-8-8s3.590-8 8-8 8 3.590 8 8-3.590 8-8 8z"/></svg></div>
<div class="tr" style="top:1524px"><div class="cb" style="top:38.600px"></div><svg class="ic" style="left:142.900px;top:27.900px;width:53.400px;height:53.400px;overflow:hidden" viewBox="0 0 53.400 53.400"><path fill="#4a90e2" stroke="#4a90e2" stroke-width="5" stroke-linejoin="round" d="M2.800 26.700 14.900 2.500H38.500L50.600 26.700 38.500 50.900H14.900z"/><g fill="#4a90e2" stroke="#fff" stroke-width="1.700"><rect x="12.800" y="13.900" width="5.600" height="5.600"/><rect x="12.800" y="23.700" width="5.600" height="5.600"/><rect x="12.800" y="33.300" width="5.600" height="5.600"/><rect x="21.900" y="13.900" width="18.500" height="5.600"/><rect x="21.900" y="23.700" width="18.500" height="5.600"/><rect x="21.900" y="33.300" width="18.500" height="5.600"/></g><g><ellipse cx="41.600" cy="13.300" rx="11.700" ry="13.200" fill="#36bb96"/><path fill="#f6f6f6" d="M33.600 11.800c.8-2.600 3.800-3.700 6.400-3.600 1.300-1.700 3.900-2.600 5-1.700 1.100.9.900 2.400 1.800 3.600 1.300 1.400 2.800 2.900 2.200 4.500-.6 1.600-2.700 1.400-4 2.300-1.400.9-2.700.3-3.900-.7-2.300.7-5.900-.6-7.500-4.400z"/><path fill="none" stroke="#1a1a1a" stroke-width="2.100" stroke-linecap="round" d="M40.600 13.200 44.900 20.200"/><path fill="none" stroke="#555" stroke-width="1.100" d="M41.200 17.600l3-1.400M42.800 20.400l2.800-1.200"/></g></svg><a class="t lnk" style="left:212.9px;top:39.1px;font-size:29.5px;letter-spacing:0.43px;">meal_type</a><span class="t" style="left:571.1px;top:39.1px;font-size:29.5px;transform:scaleX(1.0156);transform-origin:0 0;letter-spacing:0.75px;">admin</span><a class="t lnk" style="left:1426.4px;top:39.1px;font-size:29.5px;letter-spacing:0.51px;">hive_column</a><svg class="ic" style="left:1865.9px;top:35.7px;width:39px;height:39px;" viewBox="0 0 24 24"><path fill="#1976d2" d="M13 7h-2v4H7v2h4v4h2v-4h4v-2h-4V7zm-1-5C6.480 2 2 6.480 2 12s4.480 10 10 10 10-4.480 10-10S17.520 2 12 2zm0 18c-4.410 0-8-3.590-8-8s3.590-8 8-8 8 3.590 8 8-3.590 8-8 8z"/></svg><svg class="ic" style="left:2293.9px;top:35.7px;width:39px;height:39px;" viewBox="0 0 24 24"><path fill="#1976d2" d="M13 7h-2v4H7v2h4v4h2v-4h4v-2h-4V7zm-1-5C6.480 2 2 6.480 2 12s4.480 10 10 10 10-4.480 10-10S17.520 2 12 2zm0 18c-4.410 0-8-3.590-8-8s3.590-8 8-8 8 3.590 8 8-3.590 8-8 8z"/></svg></div>
<div class="tr" style="top:1636px"><div class="cb" style="top:38.600px"></div><svg class="ic" style="left:142.900px;top:27.900px;width:53.400px;height:53.400px;overflow:hidden" viewBox="0 0 53.400 53.400"><path fill="#4a90e2" stroke="#4a90e2" stroke-width="5" stroke-linejoin="round" d="M2.800 26.700 14.900 2.500H38.500L50.600 26.700 38.500 50.900H14.900z"/><g fill="#4a90e2" stroke="#fff" stroke-width="1.700"><rect x="12.800" y="13.900" width="5.600" height="5.600"/><rect x="12.800" y="23.700" width="5.600" height="5.600"/><rect x="12.800" y="33.300" width="5.600" height="5.600"/><rect x="21.900" y="13.900" width="18.500" height="5.600"/><rect x="21.900" y="23.700" width="18.500" height="5.600"/><rect x="21.900" y="33.300" width="18.500" height="5.600"/></g><g><ellipse cx="41.600" cy="13.300" rx="11.700" ry="13.200" fill="#36bb96"/><path fill="#f6f6f6" d="M33.600 11.800c.8-2.600 3.800-3.700 6.400-3.600 1.300-1.700 3.900-2.600 5-1.700 1.100.9.900 2.400 1.800 3.600 1.300 1.400 2.800 2.900 2.200 4.500-.6 1.600-2.700 1.400-4 2.300-1.400.9-2.700.3-3.900-.7-2.300.7-5.900-.6-7.500-4.400z"/><path fill="none" stroke="#1a1a1a" stroke-width="2.100" stroke-linecap="round" d="M40.600 13.200 44.900 20.200"/><path fill="none" stroke="#555" stroke-width="1.100" d="M41.200 17.600l3-1.400M42.800 20.400l2.800-1.200"/></g></svg><a class="t lnk" style="left:213.7px;top:39.1px;font-size:29.5px;letter-spacing:0.61px;">order_id</a><span class="t" style="left:571.1px;top:39.1px;font-size:29.5px;transform:scaleX(1.0156);transform-origin:0 0;letter-spacing:0.75px;">admin</span><a class="t lnk" style="left:1426.4px;top:39.1px;font-size:29.5px;letter-spacing:0.51px;">hive_column</a><svg class="ic" style="left:1865.9px;top:35.7px;width:39px;height:39px;" viewBox="0 0 24 24"><path fill="#1976d2" d="M13 7h-2v4H7v2h4v4h2v-4h4v-2h-4V7zm-1-5C6.480 2 2 6.480 2 12s4.480 10 10 10 10-4.480 10-10S17.520 2 12 2zm0 18c-4.410 0-8-3.590-8-8s3.590-8 8-8 8 3.590 8 8-3.590 8-8 8z"/></svg><svg class="ic" style="left:2293.9px;top:35.7px;width:39px;height:39px;" viewBox="0 0 24 24"><path fill="#1976d2" d="M13 7h-2v4H7v2h4v4h2v-4h4v-2h-4V7zm-1-5C6.480 2 2 6.480 2 12s4.480 10 10 10 10-4.480 10-10S17.520 2 12 2zm0 18c-4.410 0-8-3.590-8-8s3.590-8 8-8 8 3.590 8 8-3.590 8-8 8z"/></svg></div>
<div class="tr" style="top:1748px"><div class="cb" style="top:38.600px"></div><svg class="ic" style="left:142.900px;top:27.900px;width:53.400px;height:53.400px;overflow:hidden" viewBox="0 0 53.400 53.400"><path fill="#4a90e2" stroke="#4a90e2" stroke-width="5" stroke-linejoin="round" d="M2.800 26.700 14.900 2.500H38.500L50.600 26.700 38.500 50.900H14.900z"/><g fill="#4a90e2" stroke="#fff" stroke-width="1.700"><rect x="12.800" y="13.900" width="5.600" height="5.600"/><rect x="12.800" y="23.700" width="5.600" height="5.600"/><rect x="12.800" y="33.300" width="5.600" height="5.600"/><rect x="21.900" y="13.900" width="18.500" height="5.600"/><rect x="21.900" y="23.700" width="18.500" height="5.600"/><rect x="21.900" y="33.300" width="18.500" height="5.600"/></g><g><ellipse cx="41.600" cy="13.300" rx="11.700" ry="13.200" fill="#36bb96"/><path fill="#f6f6f6" d="M33.600 11.800c.8-2.600 3.800-3.700 6.400-3.600 1.300-1.700 3.900-2.600 5-1.700 1.100.9.900 2.400 1.800 3.600 1.300 1.400 2.800 2.900 2.200 4.500-.6 1.600-2.700 1.400-4 2.300-1.400.9-2.700.3-3.900-.7-2.300.7-5.900-.6-7.500-4.400z"/><path fill="none" stroke="#1a1a1a" stroke-width="2.100" stroke-linecap="round" d="M40.600 13.200 44.900 20.200"/><path fill="none" stroke="#555" stroke-width="1.100" d="M41.200 17.600l3-1.400M42.800 20.400l2.800-1.200"/></g></svg><a class="t lnk" style="left:213.7px;top:39.1px;font-size:29.5px;letter-spacing:0.61px;">order_id</a><span class="t" style="left:571.1px;top:39.1px;font-size:29.5px;transform:scaleX(1.0156);transform-origin:0 0;letter-spacing:0.75px;">admin</span><a class="t lnk" style="left:1426.4px;top:39.1px;font-size:29.5px;letter-spacing:0.51px;">hive_column</a><svg class="ic" style="left:1865.9px;top:35.7px;width:39px;height:39px;" viewBox="0 0 24 24"><path fill="#1976d2" d="M13 7h-2v4H7v2h4v4h2v-4h4v-2h-4V7zm-1-5C6.480 2 2 6.480 2 12s4.480 10 10 10 10-4.480 10-10S17.520 2 12 2zm0 18c-4.410 0-8-3.590-8-8s3.590-8 8-8 8 3.590 8 8-3.590 8-8 8z"/></svg><svg class="ic" style="left:2293.9px;top:35.7px;width:39px;height:39px;" viewBox="0 0 24 24"><path fill="#1976d2" d="M13 7h-2v4H7v2h4v4h2v-4h4v-2h-4V7zm-1-5C6.480 2 2 6.480 2 12s4.480 10 10 10 10-4.480 10-10S17.520 2 12 2zm0 18c-4.410 0-8-3.590-8-8s3.590-8 8-8 8 3.590 8 8-3.590 8-8 8z"/></svg></div>
<div class="tr" style="top:1860px"><div class="cb" style="top:38.600px"></div><svg class="ic" style="left:142.900px;top:27.900px;width:53.400px;height:53.400px;overflow:hidden" viewBox="0 0 53.400 53.400"><path fill="#4a90e2" stroke="#4a90e2" stroke-width="5" stroke-linejoin="round" d="M2.800 26.700 14.900 2.500H38.500L50.600 26.700 38.500 50.900H14.900z"/><g fill="#4a90e2" stroke="#fff" stroke-width="1.700"><rect x="12.800" y="13.900" width="5.600" height="5.600"/><rect x="12.800" y="23.700" width="5.600" height="5.600"/><rect x="12.800" y="33.300" width="5.600" height="5.600"/><rect x="21.900" y="13.900" width="18.500" height="5.600"/><rect x="21.900" y="23.700" width="18.500" height="5.600"/><rect x="21.900" y="33.300" width="18.500" height="5.600"/></g><g><ellipse cx="41.600" cy="13.300" rx="11.700" ry="13.200" fill="#36bb96"/><path fill="#f6f6f6" d="M33.600 11.800c.8-2.600 3.800-3.700 6.400-3.600 1.300-1.700 3.900-2.600 5-1.700 1.100.9.900 2.400 1.800 3.600 1.300 1.400 2.800 2.900 2.200 4.500-.6 1.600-2.700 1.400-4 2.300-1.400.9-2.700.3-3.900-.7-2.300.7-5.900-.6-7.500-4.400z"/><path fill="none" stroke="#1a1a1a" stroke-width="2.100" stroke-linecap="round" d="M40.600 13.200 44.900 20.200"/><path fill="none" stroke="#555" stroke-width="1.100" d="M41.200 17.600l3-1.400M42.800 20.400l2.800-1.200"/></g></svg><a class="t lnk" style="left:213px;top:39.1px;font-size:29.5px;letter-spacing:-0.31px;">passenger_name</a><span class="t" style="left:571.1px;top:39.1px;font-size:29.5px;transform:scaleX(1.0156);transform-origin:0 0;letter-spacing:0.75px;">admin</span><a class="t lnk" style="left:1426.4px;top:39.1px;font-size:29.5px;letter-spacing:0.51px;">hive_column</a><svg class="ic" style="left:1865.9px;top:35.7px;width:39px;height:39px;" viewBox="0 0 24 24"><path fill="#1976d2" d="M13 7h-2v4H7v2h4v4h2v-4h4v-2h-4V7zm-1-5C6.480 2 2 6.480 2 12s4.480 10 10 10 10-4.480 10-10S17.520 2 12 2zm0 18c-4.410 0-8-3.590-8-8s3.590-8 8-8 8 3.590 8 8-3.590 8-8 8z"/></svg><svg class="ic" style="left:2293.9px;top:35.7px;width:39px;height:39px;" viewBox="0 0 24 24"><path fill="#1976d2" d="M13 7h-2v4H7v2h4v4h2v-4h4v-2h-4V7zm-1-5C6.480 2 2 6.480 2 12s4.480 10 10 10 10-4.480 10-10S17.520 2 12 2zm0 18c-4.410 0-8-3.590-8-8s3.590-8 8-8 8 3.590 8 8-3.590 8-8 8z"/></svg></div>
</div>
<div id="sidebar">
<div class="edge"></div>
<svg class="ic" style="left:18px;top:35px;width:62px;height:72px" viewBox="0 0 62 72"><polygon fill="#1dd1bd" points="31,0 62,18.900 62,52.500 31,72 0,52.500 0,18.900"/><polygon fill="#029a86" points="62,18.900 62,52.500 31,72 31.200,62 54,47.500 54,23.100"/><polygon fill="#034858" points="31.200,9.900 54,23.100 54,47.500 31.200,62 8.200,47.500 8.200,23.100"/><g fill="none"><path stroke="#1dd1bd" stroke-width="2.900" d="M31.600 40.300 41.300 49.200"/><circle cx="24.400" cy="33.100" r="8.700" stroke="#1dd1bd" stroke-width="3.700"/><circle cx="23.900" cy="33.200" r="3.500" stroke="#ddd7d5" stroke-width="1.500"/><path stroke="#ddd7d5" stroke-width="1.200" d="M27.500 33H41.800M24.300 36.800 25.100 47.500"/><circle cx="43.900" cy="32.800" r="2" stroke="#ddd7d5" stroke-width="1.300"/><circle cx="25.400" cy="49.600" r="2" stroke="#ddd7d5" stroke-width="1.300"/></g></svg>
<div class="brand apache">Apache</div><div class="brand atlas">Atlas</div>
<div class="sbsearch"><span class="t ph" style="left:33.8px;top:16.2px;font-size:29.5px;letter-spacing:-0.15px;">Entities, Classifications, Glossaries</span><svg class="ic" style="left:585.6px;top:16.4px;width:35.3px;height:35.3px;" viewBox="0 0 24 24"><path fill="#666" d="M15.5 14h-.79l-.28-.27C15.41 12.59 16 11.11 16 9.5 16 5.91 13.09 3 9.5 3S3 5.91 3 9.5 5.91 16 9.5 16c1.61 0 3.09-.59 4.23-1.57l.27.28v.79l5 4.99L20.49 19l-4.99-5zm-6 0C7.01 14 5 11.990 5 9.5S7.010 5 9.5 5 14 7.010 14 9.5 11.990 14 9.5 14z"/></svg></div>
<div class="frame"></div>
<div class="sbscroll"></div>
<svg class="ic" style="left:30.8px;top:276px;width:44.8px;height:44.8px;" viewBox="0 0 24 24"><path fill="#fff" d="M16.59 8.59 12 13.17 7.41 8.59 6 10l6 6 6-6z"/></svg>
<span class="t sb" style="left:88.4px;top:283.6px;font-size:28.5px;transform:scaleX(1.0307);transform-origin:0 0;letter-spacing:0.75px;color:#fff">Entities</span>
<svg class="ic" style="left:456.4px;top:279.6px;width:38.2px;height:38.2px;" viewBox="0 0 24 24"><path fill="#fff" d="M17.65 6.35C16.2 4.9 14.21 4 12 4c-4.42 0-7.99 3.58-7.99 8s3.57 8 7.99 8c3.73 0 6.84-2.55 7.73-6h-2.080c-.82 2.33-3.04 4-5.65 4-3.310 0-6-2.690-6-6s2.690-6 6-6c1.660 0 3.140.690 4.220 1.780L13 11h7V4l-2.350 2.350z"/></svg>
<div class="toggle"><i></i></div>
<svg class="ic" style="left:593.3px;top:276.5px;width:44px;height:44px;" viewBox="0 0 24 24"><path fill="#fff" d="M12 8c1.100 0 2-.9 2-2s-.9-2-2-2-2 .9-2 2 .9 2 2 2zm0 2c-1.100 0-2 .9-2 2s.9 2 2 2 2-.9 2-2-.9-2-2-2zm0 6c-1.100 0-2 .9-2 2s.9 2 2 2 2-.9 2-2-.9-2-2-2z"/></svg>
<div class="trow" style="top:346.3px"><svg class="ic" style="left:-6px;top:17px;width:30px;height:30px;" viewBox="0 0 24 24"><path fill="#d8e0e4" d="M16.59 8.59 12 13.17 7.41 8.59 6 10l6 6 6-6z"/></svg><svg class="ic" style="left:44.3px;top:16.3px;width:31.7px;height:31.7px;" viewBox="0 0 24 24"><path fill="#d8e0e4" d="M9.17 6l2 2H20v10H4V6h5.170M10 4H4c-1.100 0-1.990.9-1.990 2L2 18c0 1.100.9 2 2 2h16c1.100 0 2-.9 2-2V8c0-1.100-.9-2-2-2h-8l-2-2z"/></svg><span class="t" style="left:93.8px;top:16.2px;font-size:29.5px;letter-spacing:0.20px;">file_system (27)</span></div>
<div class="trow" style="top:427.7px"><svg class="ic" style="left:70.8px;top:16.3px;width:31px;height:31px;" viewBox="0 0 24 24"><path fill="#d8e0e4" d="M14 2H6c-1.100 0-1.990.9-1.990 2L4 20c0 1.100.890 2 1.990 2H18c1.100 0 2-.9 2-2V8l-6-6zM6 20V4h7v5h5v11H6z"/></svg><span class="t" style="left:119.2px;top:16.2px;font-size:29.5px;letter-spacing:0.36px;">hdfs_path (27)</span></div>
<div class="trow" style="top:509.1px"><svg class="ic" style="left:-6px;top:17px;width:30px;height:30px;" viewBox="0 0 24 24"><path fill="#d8e0e4" d="M16.59 8.59 12 13.17 7.41 8.59 6 10l6 6 6-6z"/></svg><svg class="ic" style="left:44.3px;top:16.3px;width:31.7px;height:31.7px;" viewBox="0 0 24 24"><path fill="#d8e0e4" d="M9.17 6l2 2H20v10H4V6h5.170M10 4H4c-1.100 0-1.990.9-1.990 2L2 18c0 1.100.9 2 2 2h16c1.100 0 2-.9 2-2V8c0-1.100-.9-2-2-2h-8l-2-2z"/></svg><span class="t" style="left:92.2px;top:16.2px;font-size:29.5px;letter-spacing:0.04px;">hbase (11)</span></div>
<div class="trow" style="top:590.4px"><svg class="ic" style="left:70.8px;top:16.3px;width:31px;height:31px;" viewBox="0 0 24 24"><path fill="#d8e0e4" d="M14 2H6c-1.100 0-1.990.9-1.990 2L4 20c0 1.100.890 2 1.990 2H18c1.100 0 2-.9 2-2V8l-6-6zM6 20V4h7v5h5v11H6z"/></svg><span class="t" style="left:119.2px;top:16.2px;font-size:29.5px;letter-spacing:0.46px;">hbase_column_family (9)</span></div>
<div class="trow" style="top:671.8px"><svg class="ic" style="left:70.8px;top:16.3px;width:31px;height:31px;" viewBox="0 0 24 24"><path fill="#d8e0e4" d="M14 2H6c-1.100 0-1.990.9-1.990 2L4 20c0 1.100.890 2 1.990 2H18c1.100 0 2-.9 2-2V8l-6-6zM6 20V4h7v5h5v11H6z"/></svg><span class="t" style="left:119.2px;top:16.2px;font-size:29.5px;letter-spacing:-0.14px;">hbase_namespace (1)</span></div>
<div class="trow" style="top:753.2px"><svg class="ic" style="left:70.8px;top:16.3px;width:31px;height:31px;" viewBox="0 0 24 24"><path fill="#d8e0e4" d="M14 2H6c-1.100 0-1.990.9-1.990 2L4 20c0 1.100.890 2 1.990 2H18c1.100 0 2-.9 2-2V8l-6-6zM6 20V4h7v5h5v11H6z"/></svg><span class="t" style="left:119.2px;top:16.2px;font-size:29.5px;letter-spacing:0.19px;">hbase_table (1)</span></div>
<div class="trow" style="top:834.6px"><svg class="ic" style="left:-6px;top:17px;width:30px;height:30px;" viewBox="0 0 24 24"><path fill="#d8e0e4" d="M16.59 8.59 12 13.17 7.41 8.59 6 10l6 6 6-6z"/></svg><svg class="ic" style="left:44.3px;top:16.3px;width:31.7px;height:31.7px;" viewBox="0 0 24 24"><path fill="#d8e0e4" d="M9.17 6l2 2H20v10H4V6h5.170M10 4H4c-1.100 0-1.990.9-1.990 2L2 18c0 1.100.9 2 2 2h16c1.100 0 2-.9 2-2V8c0-1.100-.9-2-2-2h-8l-2-2z"/></svg><span class="t" style="left:92.2px;top:16.2px;font-size:29.5px;letter-spacing:0.16px;">hive (880)</span></div>
<div class="trow sel" style="top:916px"><svg class="ic" style="left:70.8px;top:16.3px;width:31px;height:31px;" viewBox="0 0 24 24"><path fill="#d8e0e4" d="M14 2H6c-1.100 0-1.990.9-1.990 2L4 20c0 1.100.890 2 1.990 2H18c1.100 0 2-.9 2-2V8l-6-6zM6 20V4h7v5h5v11H6z"/></svg><span class="t" style="left:119.2px;top:16.2px;font-size:29.5px;letter-spacing:0.33px;">hive_column (332)</span></div>
<div class="trow" style="top:997.3px"><svg class="ic" style="left:70.8px;top:16.3px;width:31px;height:31px;" viewBox="0 0 24 24"><path fill="#d8e0e4" d="M14 2H6c-1.100 0-1.990.9-1.990 2L4 20c0 1.100.890 2 1.990 2H18c1.100 0 2-.9 2-2V8l-6-6zM6 20V4h7v5h5v11H6z"/></svg><span class="t" style="left:119.2px;top:16.2px;font-size:29.5px;letter-spacing:0.32px;">hive_column_lineage (152)</span></div>
<div class="trow" style="top:1078.7px"><svg class="ic" style="left:70.8px;top:16.3px;width:31px;height:31px;" viewBox="0 0 24 24"><path fill="#d8e0e4" d="M14 2H6c-1.100 0-1.990.9-1.990 2L4 20c0 1.100.890 2 1.990 2H18c1.100 0 2-.9 2-2V8l-6-6zM6 20V4h7v5h5v11H6z"/></svg><span class="t" style="left:119.2px;top:16.2px;font-size:29.5px;letter-spacing:0.23px;">hive_db (20)</span></div>
<div class="trow" style="top:1160.1px"><svg class="ic" style="left:70.8px;top:16.3px;width:31px;height:31px;" viewBox="0 0 24 24"><path fill="#d8e0e4" d="M14 2H6c-1.100 0-1.990.9-1.990 2L4 20c0 1.100.890 2 1.990 2H18c1.100 0 2-.9 2-2V8l-6-6zM6 20V4h7v5h5v11H6z"/></svg><span class="t" style="left:119.2px;top:16.2px;font-size:29.5px;letter-spacing:0.42px;">hive_db_ddl (25)</span></div>
<div class="trow" style="top:1241.5px"><svg class="ic" style="left:70.8px;top:16.3px;width:31px;height:31px;" viewBox="0 0 24 24"><path fill="#d8e0e4" d="M14 2H6c-1.100 0-1.990.9-1.990 2L4 20c0 1.100.890 2 1.990 2H18c1.100 0 2-.9 2-2V8l-6-6zM6 20V4h7v5h5v11H6z"/></svg><span class="t" style="left:119.2px;top:16.2px;font-size:29.5px;letter-spacing:-0.01px;">hive_process (56)</span></div>
<div class="trow" style="top:1322.9px"><svg class="ic" style="left:70.8px;top:16.3px;width:31px;height:31px;" viewBox="0 0 24 24"><path fill="#d8e0e4" d="M14 2H6c-1.100 0-1.990.9-1.990 2L4 20c0 1.100.890 2 1.990 2H18c1.100 0 2-.9 2-2V8l-6-6zM6 20V4h7v5h5v11H6z"/></svg><span class="t" style="left:119.2px;top:16.2px;font-size:29.5px;letter-spacing:0.19px;">hive_process_execution (58)</span></div>
<div class="trow" style="top:1404.2px"><svg class="ic" style="left:70.8px;top:16.3px;width:31px;height:31px;" viewBox="0 0 24 24"><path fill="#d8e0e4" d="M14 2H6c-1.100 0-1.990.9-1.990 2L4 20c0 1.100.890 2 1.990 2H18c1.100 0 2-.9 2-2V8l-6-6zM6 20V4h7v5h5v11H6z"/></svg><span class="t" style="left:119.2px;top:16.2px;font-size:29.5px;letter-spacing:0.04px;">hive_storagedesc (77)</span></div>
<div class="trow" style="top:1485.6px"><svg class="ic" style="left:70.8px;top:16.3px;width:31px;height:31px;" viewBox="0 0 24 24"><path fill="#d8e0e4" d="M14 2H6c-1.100 0-1.990.9-1.990 2L4 20c0 1.100.890 2 1.990 2H18c1.100 0 2-.9 2-2V8l-6-6zM6 20V4h7v5h5v11H6z"/></svg><span class="t" style="left:119.2px;top:16.2px;font-size:29.5px;letter-spacing:0.37px;">hive_table (77)</span></div>
<div class="trow" style="top:1567px"><svg class="ic" style="left:70.8px;top:16.3px;width:31px;height:31px;" viewBox="0 0 24 24"><path fill="#d8e0e4" d="M14 2H6c-1.100 0-1.990.9-1.990 2L4 20c0 1.100.890 2 1.990 2H18c1.100 0 2-.9 2-2V8l-6-6zM6 20V4h7v5h5v11H6z"/></svg><span class="t" style="left:119.2px;top:16.2px;font-size:29.5px;letter-spacing:0.48px;">hive_table_ddl (83)</span></div>
<div class="trow" style="top:1648.4px"><svg class="ic" style="left:-6px;top:17px;width:30px;height:30px;" viewBox="0 0 24 24"><path fill="#d8e0e4" d="M16.59 8.59 12 13.17 7.41 8.59 6 10l6 6 6-6z"/></svg><svg class="ic" style="left:44.3px;top:16.3px;width:31.7px;height:31.7px;" viewBox="0 0 24 24"><path fill="#d8e0e4" d="M9.17 6l2 2H20v10H4V6h5.170M10 4H4c-1.100 0-1.990.9-1.990 2L2 18c0 1.100.9 2 2 2h16c1.100 0 2-.9 2-2V8c0-1.100-.9-2-2-2h-8l-2-2z"/></svg><span class="t" style="left:92.9px;top:16.2px;font-size:29.5px;transform:scaleX(1.0014);transform-origin:0 0;letter-spacing:0.75px;">other_types</span></div>
<div class="trow" style="top:1729.8px"><svg class="ic" style="left:70.8px;top:16.3px;width:31px;height:31px;" viewBox="0 0 24 24"><path fill="#d8e0e4" d="M14 2H6c-1.100 0-1.990.9-1.990 2L4 20c0 1.100.890 2 1.990 2H18c1.100 0 2-.9 2-2V8l-6-6zM6 20V4h7v5h5v11H6z"/></svg><span class="t" style="left:121.7px;top:16.2px;font-size:29.5px;transform:scaleX(0.9377);transform-origin:0 0;letter-spacing:-0.75px;">_ALL_ENTITY_TYPES</span></div>
<svg class="ic" style="left:600.9px;top:1829.3px;width:52px;height:52px;" viewBox="0 0 24 24"><path fill="#fff" d="M17.59 18 19 16.59 14.42 12 19 7.41 17.59 6l-6 6z M11 18l1.410-1.410L7.830 12l4.580-4.590L11 6l-6 6z"/></svg>
</div>
<div id="vscroll"></div>
<svg id="cursor" viewBox="0 0 24 36"><path d="M2 1.500V27l6.200-5.800 4.600 10.300 4.200-1.900-4.600-10.100H20.500z" fill="#000" stroke="#fff" stroke-width="2" stroke-linejoin="round"/></svg>
<div class="corner"></div><div class="corner r"></div>

</div>
</body></html>
